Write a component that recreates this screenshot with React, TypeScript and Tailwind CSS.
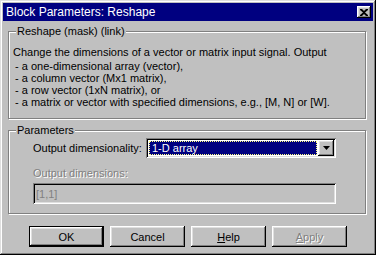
import React from "react";

const raised =
  "shadow-[inset_-1px_-1px_#000,inset_1px_1px_#fff,inset_-2px_-2px_#808080,inset_2px_2px_#dfdfdf]";
const sunken =
  "shadow-[inset_1px_1px_#808080,inset_-1px_-1px_#fff,inset_2px_2px_#000,inset_-2px_-2px_#dfdfdf]";
const etched = "border border-[#808080] shadow-[inset_1px_1px_#fff,1px_1px_#fff]";
const disabledText = "text-[#808080] [text-shadow:1px_1px_0_#fff]";

function Button({
  children,
  isDefault,
}: {
  children: React.ReactNode;
  isDefault?: boolean;
}) {
  if (isDefault) {
    return (
      <div className="w-[75px] h-[21px] border border-black">
        <div className={`w-full h-full flex items-center justify-center ${raised}`}>{children}</div>
      </div>
    );
  }
  return (
    <div className={`w-[75px] h-[21px] flex items-center justify-center ${raised}`}>{children}</div>
  );
}

export default function App() {
  return (
    <div
      className="w-[376px] h-[255px] bg-[#c0c0c0] p-[3px] text-[11px] leading-[12px] text-black shadow-[inset_-1px_-1px_#000,inset_1px_1px_#dfdfdf,inset_-2px_-2px_#808080,inset_2px_2px_#fff]"
      style={{ fontFamily: '"Liberation Sans", Arial, sans-serif' }}
    >
      {/* title bar */}
      <div className="h-[18px] bg-[#000080] flex items-center justify-between pl-[3px] pr-[2px]">
        <span className="text-white text-[12px]">Block Parameters: Reshape</span>
        <div className={`w-[14px] h-[12px] bg-[#c0c0c0] flex items-center justify-center ${raised}`}>
          <svg width="8" height="7" viewBox="0 0 8 7">
            <path d="M0 0h2l2 2 2-2h2v1L5 3.5 8 6v1H6L4 5 2 7H0V6l3-2.5L0 1z" fill="#000" />
          </svg>
        </div>
      </div>

      <div className="px-[5px]">
        {/* mask description */}
        <div className={`relative mt-[10px] w-[358px] h-[88px] ${etched}`}>
          <span className="absolute left-[7px] top-[-7px] bg-[#c0c0c0] px-[1px] leading-[13px]">
            Reshape (mask) (link)
          </span>
          <div className="pt-[14px] pl-[4px]">
            <div className="mb-[2px]">Change the dimensions of a vector or matrix input signal. Output</div>
            <div className="pl-[2px]">- a one-dimensional array (vector),</div>
            <div className="pl-[2px]">- a column vector (Mx1 matrix),</div>
            <div className="pl-[2px]">- a row vector (1xN matrix), or</div>
            <div className="pl-[2px]">- a matrix or vector with specified dimensions, e.g., [M, N] or [W].</div>
          </div>
        </div>

        {/* parameters */}
        <div className={`relative mt-[11px] w-[358px] ${etched} pt-[7px] pb-[9px] pl-[24px]`}>
          <span className="absolute left-[7px] top-[-7px] bg-[#c0c0c0] px-[1px] leading-[13px]">
            Parameters
          </span>
          <div className="flex items-center">
            <span className="w-[113px]">Output dimensionality:</span>
            <div className={`w-[190px] h-[20px] bg-white p-[2px] flex ${sunken}`}>
              <div className="flex-1 p-[1px] pr-0">
                <div className="h-full bg-[#000080] border border-dotted border-[#ffff80] text-white pl-[2px] flex items-center">
                  1-D array
                </div>
              </div>
              <div className={`w-[16px] h-[16px] ml-[1px] bg-[#c0c0c0] flex items-center justify-center ${raised}`}>
                <svg width="7" height="4" viewBox="0 0 7 4">
                  <path d="M0 0h7L3.5 4z" fill="#000" />
                </svg>
              </div>
            </div>
          </div>
          <div className={`mt-[9px] ${disabledText}`}>Output dimensions:</div>
          <div className={`mt-[4px] w-[303px] h-[21px] flex items-center pl-[3px] text-[#808080] ${sunken}`}>
            [1,1]
          </div>
        </div>

        {/* buttons */}
        <div className="mt-[12px] pl-[21px] flex gap-[6px]">
          <Button isDefault>OK</Button>
          <Button>Cancel</Button>
          <Button>
            <span>
              <span className="underline underline-offset-1">H</span>elp
            </span>
          </Button>
          <Button>
            <span className={disabledText}>
              <span className="underline underline-offset-1">A</span>pply
            </span>
          </Button>
        </div>
      </div>
    </div>
  );
}
